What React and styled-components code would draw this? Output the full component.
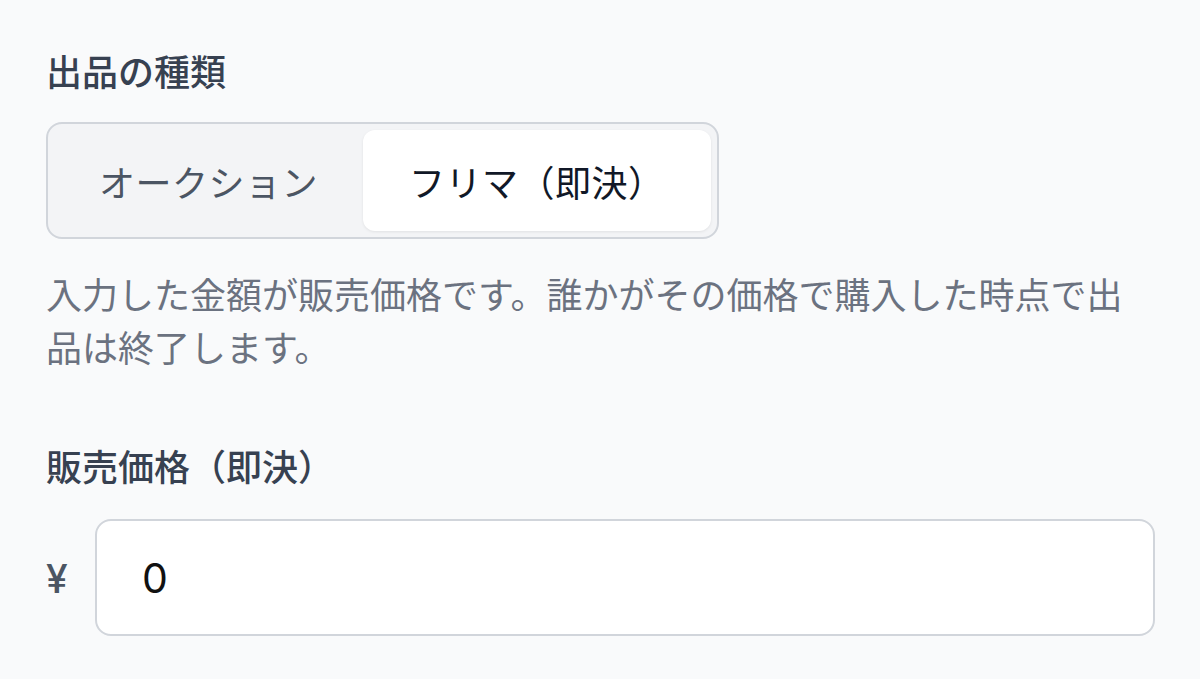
import React from 'react';
import styled, { createGlobalStyle } from 'styled-components';

const GlobalStyle = createGlobalStyle`
    html, body {
        margin: 0;
        padding: 0;
        background: #f9fafb;
    }
    body {
        font-family: "Inter", "Noto Sans CJK JP", sans-serif;
    }
`

const Page = styled.div`
    width: 1200px;
    height: 679px;
    box-sizing: border-box;
    padding: 46px 45px 0 46px;
    background: #f9fafb;
    overflow: hidden;
`
const Label = styled.div`
    font-size: 36px;
    line-height: 54px;
    font-weight: 500;
    color: #374151;
    margin-top: ${props => props.top || 0}px;
`
const Segment = styled.div`
    display: inline-flex;
    margin-top: 22px;
    padding: 6px;
    border: 2px solid #d1d5db;
    border-radius: 16px;
    background: #f3f4f6;
`
const SegmentButton = styled.button`
    font-family: inherit;
    font-size: 36px;
    height: 101px;
    padding: 0 ${props => props.active ? 46 : 45}px;
    border: none;
    border-radius: 12px;
    cursor: pointer;
    letter-spacing: 0.5px;
    color: ${props => props.active ? '#111827' : '#4b5563'};
    background: ${props => props.active ? '#ffffff' : 'transparent'};
    box-shadow: ${props => props.active ? '0 1px 3px rgba(0, 0, 0, 0.08)' : 'none'};
`
const Description = styled.p`
    margin: 31px 0 0 0;
    font-size: 36px;
    line-height: 53px;
    color: #6b7280;
`
const PriceRow = styled.div`
    display: flex;
    align-items: center;
    gap: 22px;
    margin-top: 24px;
`
const Currency = styled.span`
    font-size: 39px;
    font-weight: 500;
    color: #4b5563;
    width: 27px;
    margin-top: 2px;
`
const PriceInput = styled.input`
    flex: 1;
    height: 117px;
    box-sizing: border-box;
    padding: 0 45px;
    border: 2px solid #d1d5db;
    border-radius: 16px;
    background: #ffffff;
    font-family: inherit;
    font-size: 41px;
    color: #111111;
    outline: none;
`

const App = () => {
    const [kind, setKind] = React.useState('flea');
    const [price, setPrice] = React.useState('0');

    return(
        <Page>
            <GlobalStyle />
            <Label>出品の種類</Label>
            <Segment>
                <SegmentButton active={kind === 'auction'} onClick={() => setKind('auction')}>
                    オークション
                </SegmentButton>
                <SegmentButton active={kind === 'flea'} onClick={() => setKind('flea')}>
                    フリマ（即決）
                </SegmentButton>
            </Segment>
            <Description>
                入力した金額が販売価格です。誰かがその価格で購入した時点で出品は終了します。
            </Description>
            <Label top={65}>販売価格（即決）</Label>
            <PriceRow>
                <Currency>¥</Currency>
                <PriceInput value={price} onChange={e => setPrice(e.target.value)} />
            </PriceRow>
        </Page>
    )
}

export default App;
